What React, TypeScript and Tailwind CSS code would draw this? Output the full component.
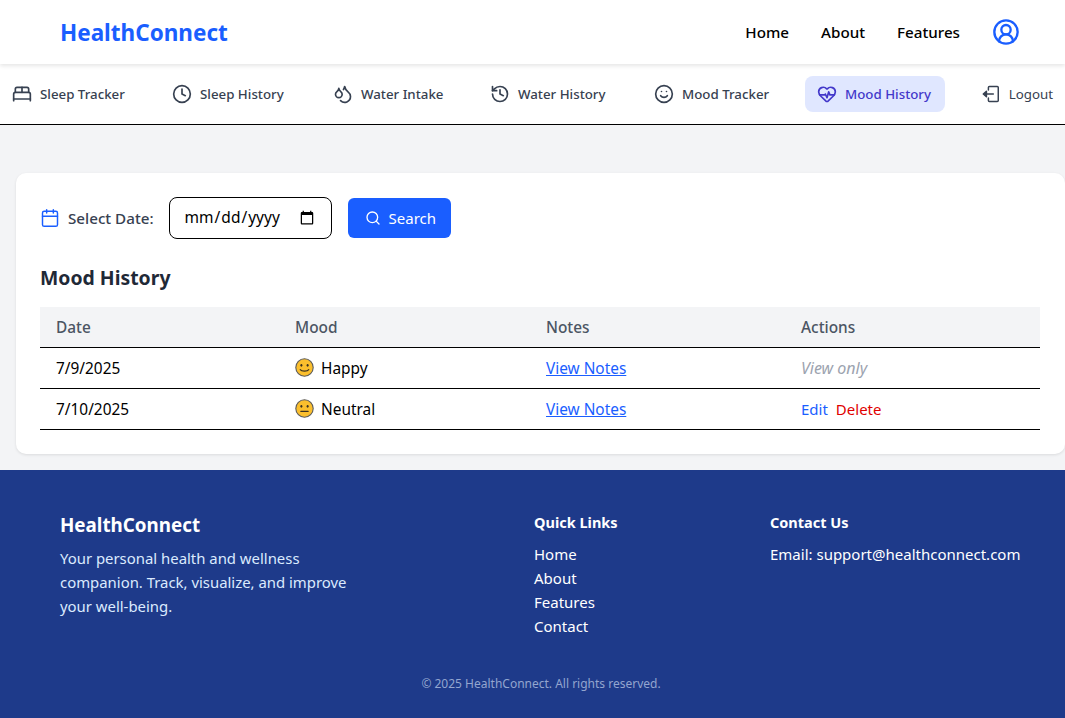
import { BedDouble, Calendar, CircleUserRound, Clock, Droplets, HeartPulse, History, Search, Smile } from 'lucide-react'

const tabs = [
  { label: 'Sleep Tracker', icon: BedDouble, width: 'w-[136px]' },
  { label: 'Sleep History', icon: Clock, width: 'w-[137px]' },
  { label: 'Water Intake', icon: Droplets, width: 'w-[133px]' },
  { label: 'Water History', icon: History, width: 'w-[140px]' },
  { label: 'Mood Tracker', icon: Smile, width: 'w-[139px]' },
  { label: 'Mood History', icon: HeartPulse, width: 'w-[140px]', active: true },
]

function MoodFace({ mood }: { mood: 'happy' | 'neutral' }) {
  return (
    <svg width="19" height="19" viewBox="0 0 19 19" className="shrink-0">
      <circle cx="9.5" cy="9.5" r="8.7" fill="#fbbf2d" stroke="#5b5b5b" strokeWidth="1.1" />
      <ellipse cx="6.4" cy="7.3" rx="1" ry="1.4" fill="#3a3020" />
      <ellipse cx="12.6" cy="7.3" rx="1" ry="1.4" fill="#3a3020" />
      {mood === 'happy' ? (
        <path d="M5.2 11.6c1.2 2 7.4 2 8.6 0" fill="none" stroke="#3a3020" strokeWidth="1.1" strokeLinecap="round" />
      ) : (
        <path d="M5.8 12.3h7.4" fill="none" stroke="#3a3020" strokeWidth="1.2" strokeLinecap="round" />
      )}
    </svg>
  )
}

// box on the right, solid arrow going out to the left
function LogoutIcon() {
  return (
    <svg width="20" height="20" viewBox="0 0 20 20" fill="none" stroke="currentColor" strokeWidth="1.5" strokeLinecap="round" strokeLinejoin="round">
      <path d="M7.5 6V3.5a1 1 0 0 1 1-1h8a1 1 0 0 1 1 1v13a1 1 0 0 1-1 1h-8a1 1 0 0 1-1-1V14" />
      <path d="M12.5 10H5" />
      <path d="M5.5 7.2 2.3 10l3.2 2.8z" fill="currentColor" />
    </svg>
  )
}

export default function App() {
  return (
    <div className="min-h-[718px] flex flex-col bg-[#f3f4f6] font-['Noto_Sans',sans-serif] text-black">
      {/* Top navbar */}
      <header className="relative z-10 h-16 bg-white flex items-center justify-between pl-[60px] pr-[45px] shadow-[0_2px_4px_rgba(0,0,0,0.1)]">
        <span className="pt-0.5 text-[22.5px] font-bold text-[#1a5eff]">HealthConnect</span>
        <nav className="flex items-center gap-8 text-[15.2px] font-medium">
          <a>Home</a>
          <a>About</a>
          <a>Features</a>
          <CircleUserRound size={28} strokeWidth={2} className="text-[#1a5eff]" />
        </nav>
      </header>

      {/* Tracker tabs */}
      <nav className="h-[61px] bg-white border-b border-black flex items-center justify-between text-[13.3px] font-medium text-[#374151]">
        {tabs.map(({ label, icon: Icon, width, active }) => (
          <a
            key={label}
            className={`flex items-center gap-2 h-9 px-3 rounded-lg whitespace-nowrap ${width} ${active ? 'bg-[#e0e7ff] text-[#4338ca]' : ''}`}
          >
            <Icon size={20} strokeWidth={2} className="shrink-0" />
            <span className="pt-0.5">{label}</span>
          </a>
        ))}
        <a className="flex items-center gap-2 h-9 px-3 w-[96px] font-normal whitespace-nowrap">
          <LogoutIcon />
          <span className="pt-0.5">Logout</span>
        </a>
      </nav>

      {/* Content */}
      <main className="flex-1 pt-12 pl-4 pb-4">
        <div className="bg-white rounded-[10px] px-6 pt-6 pb-6 shadow-[0_1px_3px_rgba(0,0,0,0.1)]">
          <div className="flex items-center h-[42px]">
            <Calendar size={20} strokeWidth={1.75} className="text-[#1a5eff] mr-2" />
            <label className="text-[15.2px] font-medium text-[#374151] mr-[15px]">Select Date:</label>
            <input type="date" className="w-[163px] h-[42px] border border-black rounded-lg px-[14px] text-[15.5px] mr-4" />
            <button className="flex items-center gap-2 h-10 pl-[17px] pr-[15px] rounded-md bg-[#1a5eff] text-white text-[15px]">
              <Search size={16} />
              Search
            </button>
          </div>

          <h2 className="mt-[25px] mb-[15px] text-[19.4px] font-bold leading-7 text-[#1f2937]">Mood History</h2>

          <table className="w-[1000px] table-fixed border-collapse text-[15.4px]">
            <thead>
              <tr className="h-10 bg-[#f3f4f6] text-[#4b5563] text-left">
                <th className="w-[239px] pl-4 pt-0.5 font-medium">Date</th>
                <th className="w-[251px] pl-4 pt-0.5 font-medium">Mood</th>
                <th className="w-[255px] pl-4 pt-0.5 font-medium">Notes</th>
                <th className="pl-4 pt-0.5 font-medium">Actions</th>
              </tr>
            </thead>
            <tbody>
              <tr className="h-[41px] border-t border-b border-black">
                <td className="pl-4 pt-0.5">7/9/2025</td>
                <td className="pl-4">
                  <span className="flex items-center gap-[7px]"><MoodFace mood="happy" /><span className="pt-0.5">Happy</span></span>
                </td>
                <td className="pl-4 pt-0.5"><a className="text-[#1a5eff] underline">View Notes</a></td>
                <td className="pl-4 italic text-[16px] text-[#9ca3af]">View only</td>
              </tr>
              <tr className="h-[41px] border-b border-black">
                <td className="pl-4 pt-0.5">7/10/2025</td>
                <td className="pl-4">
                  <span className="flex items-center gap-[7px]"><MoodFace mood="neutral" /><span className="pt-0.5">Neutral</span></span>
                </td>
                <td className="pl-4 pt-0.5"><a className="text-[#1a5eff] underline">View Notes</a></td>
                <td className="pl-4 pt-0.5 text-[15px]">
                  <a className="text-[#1a5eff] mr-2">Edit</a>
                  <a className="text-[#e00000]">Delete</a>
                </td>
              </tr>
            </tbody>
          </table>
        </div>
      </main>

      {/* Footer */}
      <footer className="h-[248px] bg-[#1e3a8a] text-white pl-[60px] pr-[45px] pt-10">
        <div className="flex h-[165px]">
          <div className="w-[474px] shrink-0">
            <h3 className="pt-px h-7 text-[18.8px] font-bold leading-7 mb-2">HealthConnect</h3>
            <p className="w-[300px] text-[#dbeafe] text-[14.9px] leading-6">
              Your personal health and wellness companion. Track, visualize, and improve your well-being.
            </p>
          </div>
          <div className="w-[236px] shrink-0">
            <h4 className="font-bold text-[14.5px] leading-6 mb-2">Quick Links</h4>
            <ul className="text-[15px] leading-6">
              <li>Home</li>
              <li>About</li>
              <li>Features</li>
              <li>Contact</li>
            </ul>
          </div>
          <div>
            <h4 className="font-bold text-[14.5px] leading-6 mb-2">Contact Us</h4>
            <p className="text-[15px] leading-6 whitespace-nowrap">Email: support@healthconnect.com</p>
          </div>
        </div>
        <p className="text-center text-xs leading-[18px] pl-[2px] text-[#93a5cf]">© 2025 HealthConnect. All rights reserved.</p>
      </footer>
    </div>
  )
}
